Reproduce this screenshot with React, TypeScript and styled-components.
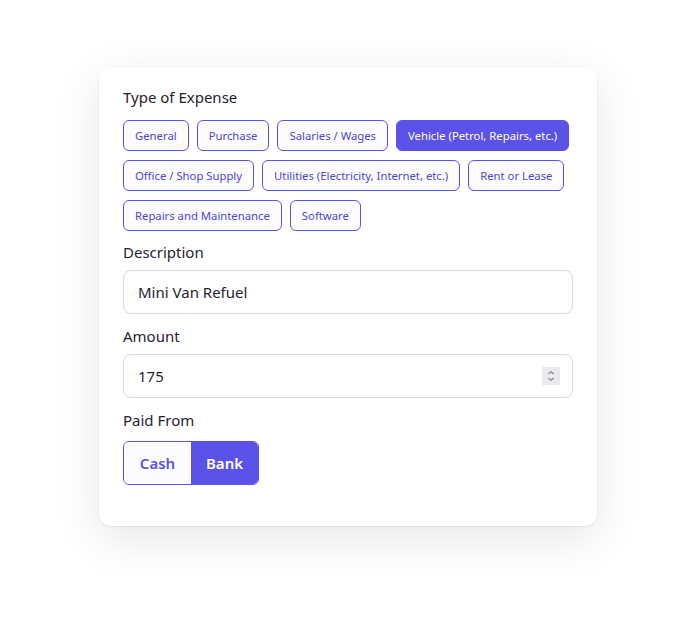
import React, { useState } from "react";
import styled, { createGlobalStyle } from "styled-components";

const Global = createGlobalStyle`
  html, body { margin: 0; padding: 0; background: #ffffff; }
  body { font-family: "Noto Sans", "Open Sans", sans-serif; color: #1f2330; }
  * { box-sizing: border-box; }
  input[type=number]::-webkit-inner-spin-button,
  input[type=number]::-webkit-outer-spin-button { -webkit-appearance: none; margin: 0; }
`;

const Page = styled.div`
  display: flex;
  justify-content: center;
  align-items: flex-start;
  min-height: 100vh;
  padding-top: 68px;
`;

const Card = styled.div`
  width: 498px;
  background: #ffffff;
  border-radius: 12px;
  padding: 18px 24px 41px;
  box-shadow: 0 12px 48px rgba(0, 0, 0, 0.1), 0 1px 2px rgba(0, 0, 0, 0.08);
  display: flex;
  flex-direction: column;
`;

const Label = styled.div`
  font-size: 15px;
  line-height: 22px;
  color: #1f2330;
  margin-bottom: 7px;
`;

const ChipWrap = styled.div`
  display: flex;
  flex-wrap: wrap;
  gap: 9px 8px;
  margin-top: 5px;
  margin-bottom: 10px;
`;

const Chip = styled.button<{ $active?: boolean }>`
  height: 31px;
  padding: 0 11px;
  border-radius: 6px;
  border: 1px solid #5b52ea;
  background: ${(p) => (p.$active ? "#5b52ea" : "#fcfcfe")};
  color: ${(p) => (p.$active ? "#ffffff" : "#4d44dc")};
  font-family: inherit;
  font-size: 11.3px;
  cursor: pointer;
`;

const Field = styled.div`
  position: relative;
  margin-bottom: 11px;
`;

const Input = styled.input`
  display: block;
  width: 100%;
  height: 44px;
  border: 1px solid #d9d9e0;
  border-radius: 8px;
  padding: 0 14px;
  font-family: inherit;
  font-size: 15px;
  color: #1f2330;
  outline: none;
  background: #fff;
  -moz-appearance: textfield;
`;

const Spinner = styled.span`
  position: absolute;
  right: 13px;
  top: 13px;
  width: 18px;
  height: 18px;
  background: #e9e9ee;
  display: flex;
  align-items: center;
  justify-content: center;
`;

const Toggle = styled.div`
  display: flex;
  align-self: flex-start;
  margin-top: 3px;
  border: 1px solid #5b52ea;
  border-radius: 6px;
  overflow: hidden;
`;

const ToggleBtn = styled.button<{ $active?: boolean }>`
  height: 42px;
  width: 67px;
  padding: 0;
  border: none;
  background: ${(p) => (p.$active ? "#5b52ea" : "#fcfcfe")};
  color: ${(p) => (p.$active ? "#ffffff" : "#5b52ea")};
  font-family: inherit;
  font-size: 15px;
  font-weight: 600;
  cursor: pointer;
`;

const types = [
  "General",
  "Purchase",
  "Salaries / Wages",
  "Vehicle (Petrol, Repairs, etc.)",
  "Office / Shop Supply",
  "Utilities (Electricity, Internet, etc.)",
  "Rent or Lease",
  "Repairs and Maintenance",
  "Software",
];

export default function App() {
  const [type, setType] = useState("Vehicle (Petrol, Repairs, etc.)");
  const [paid, setPaid] = useState("Bank");
  return (
    <>
      <Global />
      <Page>
        <Card>
          <Label>Type of Expense</Label>
          <ChipWrap>
            {types.map((t) => (
              <Chip key={t} $active={t === type} onClick={() => setType(t)}>
                {t}
              </Chip>
            ))}
          </ChipWrap>
          <Label>Description</Label>
          <Field>
            <Input defaultValue="Mini Van Refuel" />
          </Field>
          <Label>Amount</Label>
          <Field>
            <Input type="number" defaultValue={175} />
            <Spinner>
              <svg width="10" height="14" viewBox="0 0 10 14" fill="none" stroke="#8a8a95" strokeWidth="1.2">
                <path d="M2.5 5 L5 2.5 L7.5 5" />
                <path d="M2.5 9 L5 11.5 L7.5 9" />
              </svg>
            </Spinner>
          </Field>
          <Label>Paid From</Label>
          <Toggle>
            {["Cash", "Bank"].map((p) => (
              <ToggleBtn key={p} $active={p === paid} onClick={() => setPaid(p)}>
                {p}
              </ToggleBtn>
            ))}
          </Toggle>
        </Card>
      </Page>
    </>
  );
}
